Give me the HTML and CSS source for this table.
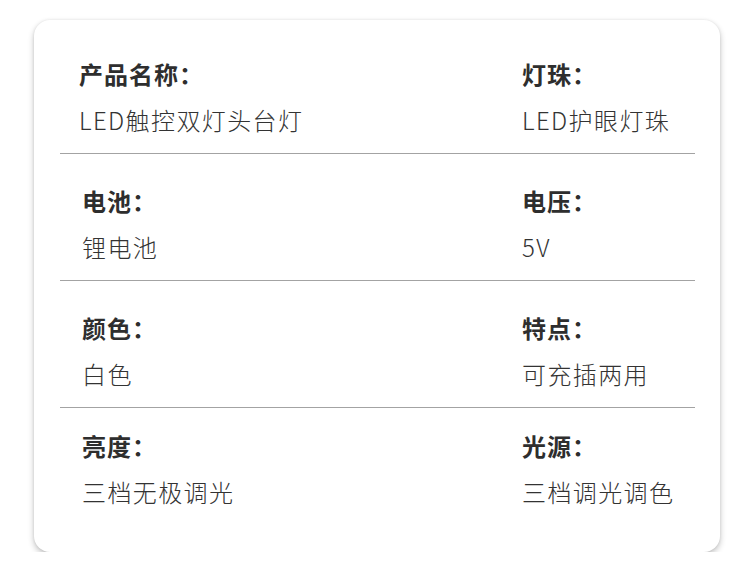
FILE: index.html
```html
<!DOCTYPE html>
<html lang="zh-CN">
<head>
<meta charset="utf-8">
<title>产品参数</title>
<link rel="stylesheet" href="styles.css">
</head>
<body>
<div class="card">
  <div class="row row-1">
    <div class="cell cell-left"><div class="label">产品名称：</div><div class="value">LED触控双灯头台灯</div></div>
    <div class="cell"><div class="label">灯珠：</div><div class="value">LED护眼灯珠</div></div>
  </div>
  <div class="row row-2">
    <div class="cell cell-left"><div class="label">电池：</div><div class="value">锂电池</div></div>
    <div class="cell"><div class="label">电压：</div><div class="value">5V</div></div>
  </div>
  <div class="row row-3">
    <div class="cell cell-left"><div class="label">颜色：</div><div class="value">白色</div></div>
    <div class="cell"><div class="label">特点：</div><div class="value">可充插两用</div></div>
  </div>
  <div class="row row-4">
    <div class="cell cell-left"><div class="label">亮度：</div><div class="value">三档无极调光</div></div>
    <div class="cell"><div class="label">光源：</div><div class="value">三档调光调色</div></div>
  </div>
</div>
</body>
</html>
```

FILE: styles.css
```css
html, body {
  margin: 0;
  padding: 0;
  background: #ffffff;
}
body {
  font-family: "Noto Sans CJK SC", "Noto Sans", sans-serif;
  color: #333333;
}
.card {
  margin: 20px 0 0 34px;
  width: 686px;
  height: 532px;
  box-sizing: border-box;
  background: #ffffff;
  border-radius: 16px;
  box-shadow: 0 3px 6px rgba(0, 0, 0, 0.24), 0 0 3px rgba(0, 0, 0, 0.08);
  padding: 0 25px 0 26px;
}
.row {
  display: grid;
  grid-template-columns: 462px 1fr;
  border-bottom: 1px solid #a3a3a3;
  padding-bottom: 18px;
}
.row-1 { padding-top: 39px; }
.row-2 { padding-top: 32px; }
.row-3 { padding-top: 32px; }
.row-4 { padding-top: 23px; border-bottom: none; }
.cell-left { padding-left: 22px; }
.row-1 .cell-left { padding-left: 19px; }
.label {
  font-size: 24px;
  line-height: 30px;
  font-weight: 700;
  letter-spacing: 1px;
  color: #2e2e2e;
}
.value {
  margin-top: 16px;
  font-size: 24px;
  line-height: 30px;
  font-weight: 300;
  letter-spacing: 1.4px;
  color: #333333;
}
```
